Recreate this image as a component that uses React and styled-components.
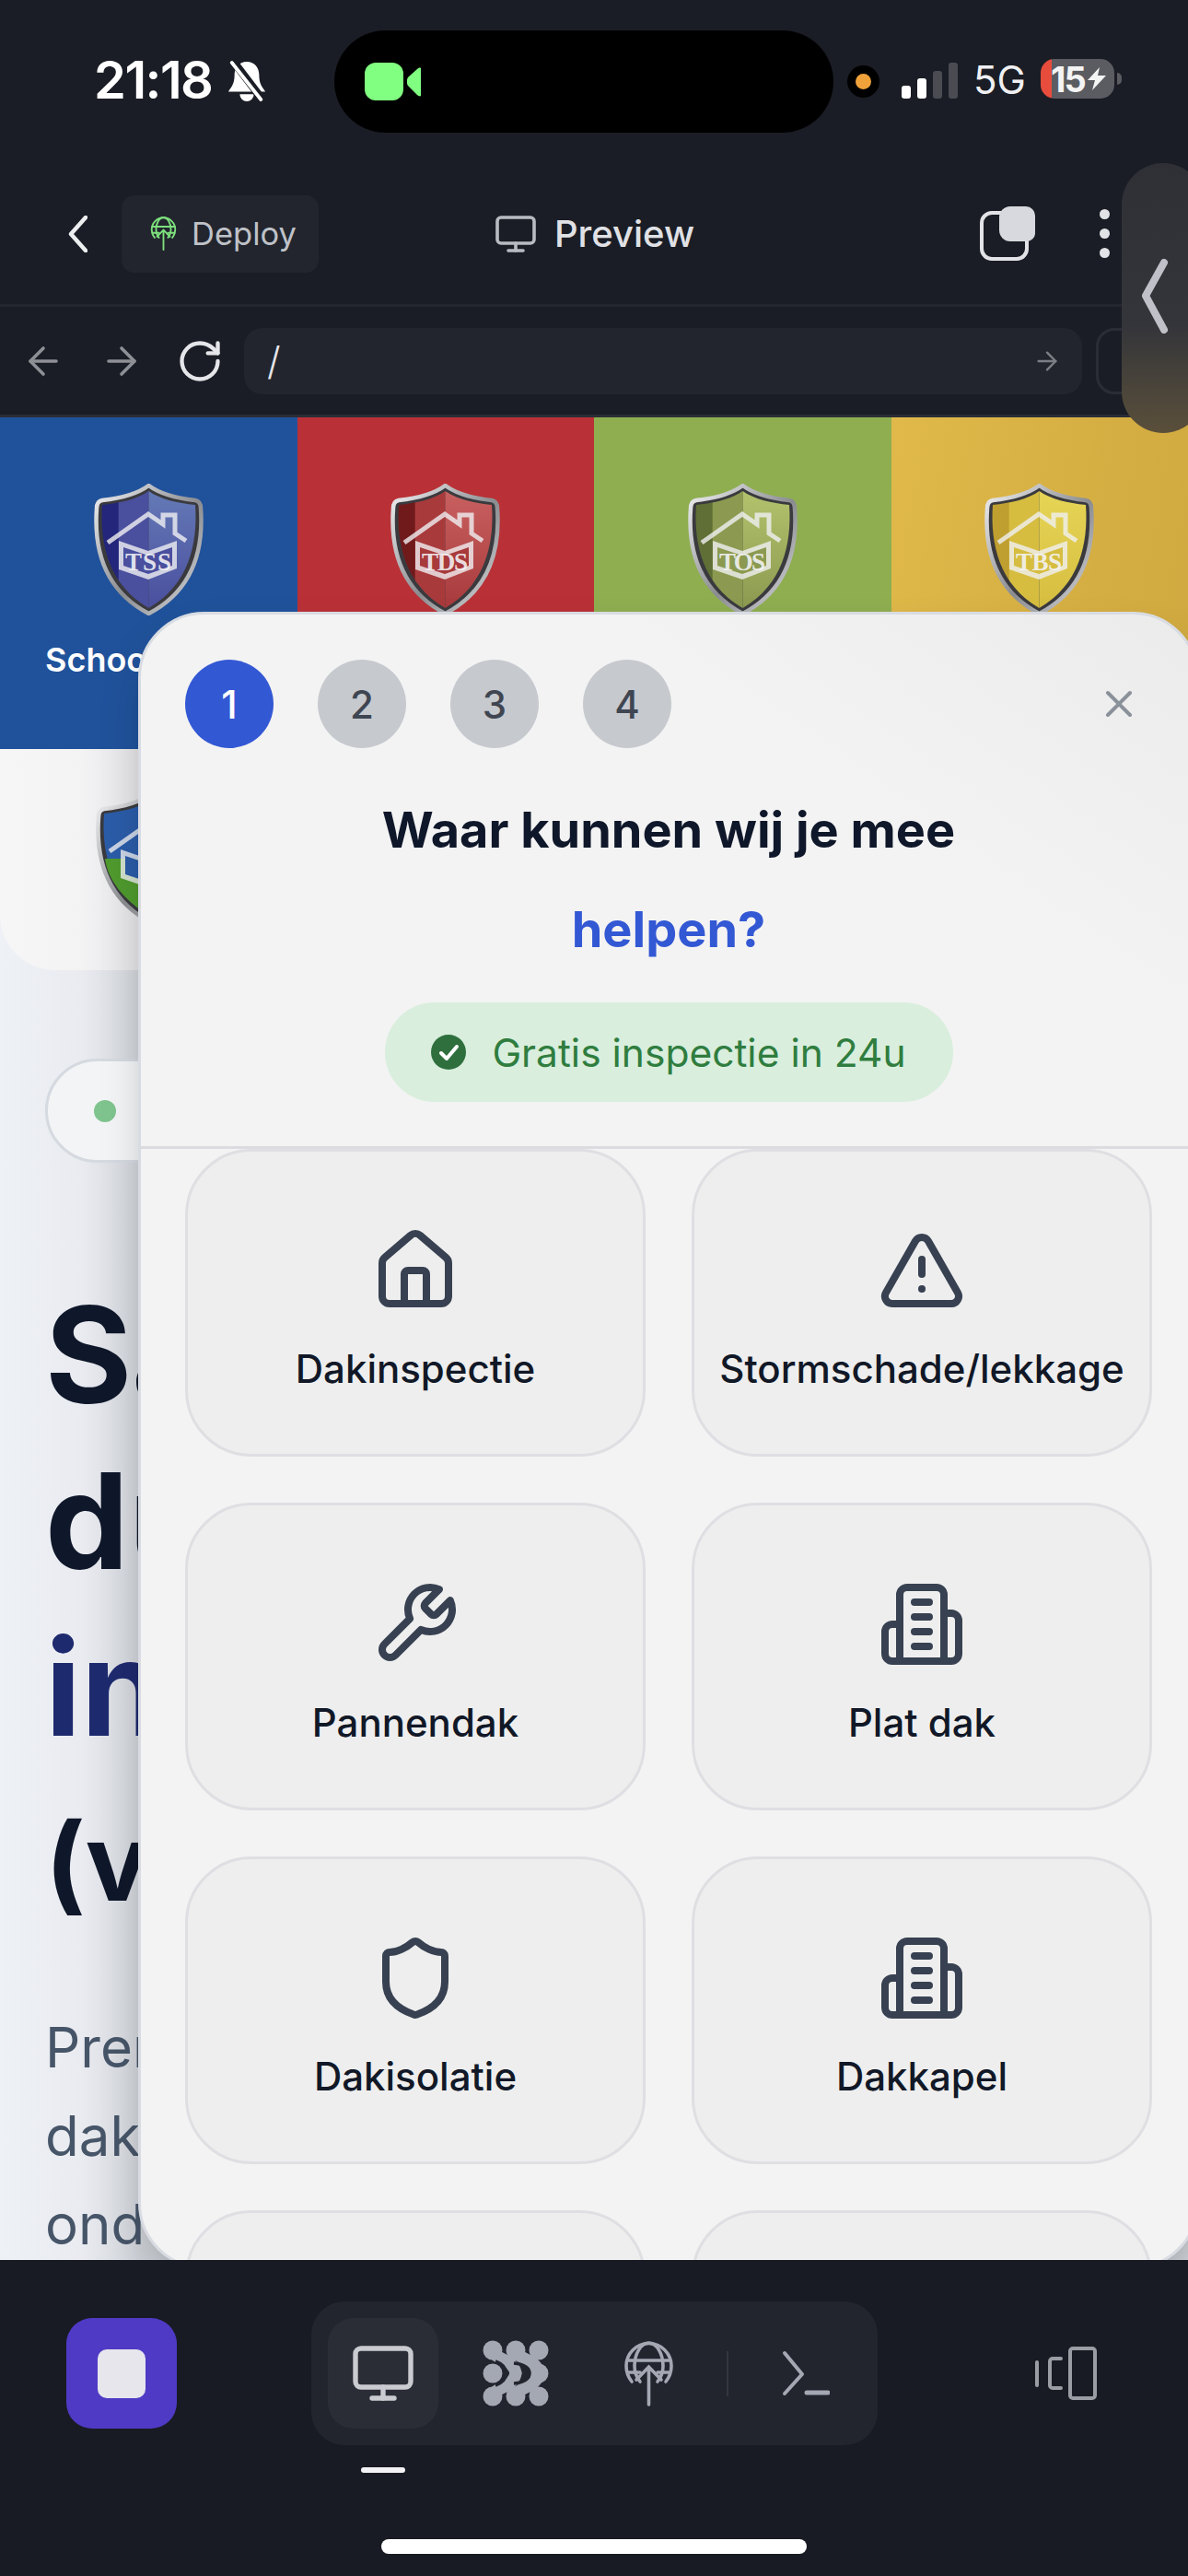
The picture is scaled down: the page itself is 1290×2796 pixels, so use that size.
import React from 'react';
import styled, { createGlobalStyle } from 'styled-components';
import {
  ArrowLeft, ArrowRight, RotateCw, Monitor, X, House, TriangleAlert, Shield,
} from 'lucide-react';

const GlobalStyle = createGlobalStyle`
  html, body { margin: 0; padding: 0; background: #181b23; }
  * { box-sizing: border-box; }
  body { font-family: Inter, "Noto Sans", sans-serif; }
`;

const Phone = styled.div`
  width: 1290px;
  height: 2796px;
  display: flex;
  flex-direction: column;
  overflow: hidden;
  position: relative;
  background: #1a1d25;
`;

/* status bar */
const StatusBar = styled.div`
  height: 177px;
  padding: 33px 0 33px 102px;
  display: flex;
  align-items: center;
  color: #fff;
`;

const Time = styled.div`
  font-size: 56px;
  font-weight: 600;
  letter-spacing: -1.5px;
  width: 133px;
  margin-top: -3px;
`;

const Island = styled.div`
  width: 542px;
  height: 111px;
  margin-left: 74px;
  border-radius: 56px;
  background: #000;
  display: flex;
  align-items: center;
  padding-left: 33px;
  gap: 4px;
`;

const CamBody = styled.div`
  width: 42px;
  height: 41px;
  border-radius: 12px;
  background: #80ff80;
`;

const MicDot = styled.div`
  width: 35px;
  height: 35px;
  margin-left: 15px;
  margin-top: -1px;
  border-radius: 50%;
  background: #000;
  display: flex;
  align-items: center;
  justify-content: center;
  &::after {
    content: '';
    width: 17px;
    height: 17px;
    border-radius: 50%;
    background: #f0a23a;
  }
`;

const Signal = styled.div`
  display: flex;
  align-items: flex-end;
  gap: 7px;
  height: 39px;
  margin-left: 24px;
  margin-top: -3px;
`;

const SignalBar = styled.div`
  width: 10px;
  height: ${(p) => p.$h}px;
  border-radius: 3px;
  background: ${(p) => (p.$on ? '#fff' : '#4a4c52')};
`;

const Network = styled.div`
  font-size: 42px;
  font-weight: 400;
  margin-left: 17px;
  margin-top: -4px;
  width: 73px;
  color: #f0f0f2;
`;

const Battery = styled.div`
  width: 80px;
  height: 43px;
  margin-top: -6px;
  border-radius: 15px;
  overflow: visible;
  position: relative;
  display: flex;
  align-items: center;
  padding-left: 11px;
  background: linear-gradient(90deg, #e74c3c 0, #e74c3c 12px, #5b5c62 12px);
  font-size: 38px;
  font-weight: 700;
  letter-spacing: -2px;
  color: #f4f4f4;
  &::after {
    content: '';
    position: absolute;
    right: -8px;
    top: 15px;
    width: 5px;
    height: 13px;
    border-radius: 0 6px 6px 0;
    background: #5b5c62;
  }
`;

/* toolbar */
const Toolbar = styled.div`
  height: 156px;
  border-bottom: 3px solid #23262e;
  display: grid;
  grid-template-columns: 1fr auto 1fr;
  align-items: center;
  padding-left: 74px;
`;

const ToolLeft = styled.div`
  display: flex;
  align-items: center;
  gap: 37px;
`;

const DeployButton = styled.div`
  width: 214px;
  height: 84px;
  border-radius: 14px;
  background: #22252e;
  display: flex;
  align-items: center;
  padding-left: 31px;
  gap: 16px;
  font-size: 34.5px;
  color: #bfc2c8;
`;

const PreviewTitle = styled.div`
  display: flex;
  align-items: center;
  gap: 18px;
  font-size: 40px;
  font-weight: 500;
  color: #e0e1e5;
  margin-left: -74px;
  svg { color: #b9bbc2; }
`;

const ToolRight = styled.div`
  display: flex;
  justify-content: flex-end;
  align-items: center;
  padding-right: 85px;
  gap: 70px;
`;

const Dots = styled.div`
  display: flex;
  flex-direction: column;
  gap: 10px;
  span {
    display: block;
    width: 11px;
    height: 11px;
    border-radius: 50%;
    background: #e2e3e7;
  }
`;

const SideHandle = styled.div`
  position: absolute;
  top: 177px;
  left: 1218px;
  width: 90px;
  height: 293px;
  border-radius: 48px;
  background: linear-gradient(180deg, #2e3035 0%, #34353a 60%, #5a4f3a 100%);
  padding: 104px 0 0 21px;
  z-index: 5;
`;

/* url bar */
const UrlRow = styled.div`
  height: 120px;
  border-bottom: 3px solid #2a2d36;
  display: flex;
  align-items: center;
  padding-left: 23px;
`;

const NavIcon = styled.div`
  display: flex;
  flex: none;
  color: ${(p) => p.$color};
  margin-right: ${(p) => p.$gap}px;
`;

const UrlField = styled.div`
  flex: none;
  width: 910px;
  height: 72px;
  border-radius: 20px;
  background: #22252e;
  display: flex;
  align-items: center;
  justify-content: space-between;
  padding: 0 22px 0 25px;
  font-size: 42px;
  font-weight: 300;
  color: #e6e6ea;
`;

const GhostField = styled.div`
  flex: none;
  width: 120px;
  height: 72px;
  margin-left: 15px;
  border-radius: 20px;
  border: 3px solid #2a2d36;
`;

/* site behind the sheet */
const Viewport = styled.div`
  height: 2000px;
  position: relative;
  overflow: hidden;
  background: linear-gradient(90deg, #eef1f5 0, #e9ebf0 90px, #d0d3d9 152px);
`;

const Bands = styled.div`
  display: grid;
  grid-template-columns: repeat(4, 1fr);
  height: 360px;
`;

const Band = styled.div`
  background: ${(p) => p.$bg};
  display: flex;
  flex-direction: column;
  align-items: center;
  padding-top: 72px;
`;

const BandLabel = styled.div`
  align-self: flex-start;
  padding-left: 49px;
  margin-top: 26px;
  font-size: 36px;
  font-weight: 600;
  color: #fff;
`;

const LogoCard = styled.div`
  height: 240px;
  width: 420px;
  padding: 47px 0 0 104px;
  border-radius: 0 0 60px 60px;
  background: linear-gradient(90deg, #f6f6f7 0, #f3f3f4 90px, #e2e2e5 152px);
`;

const Content = styled.div`
  padding: 96px 0 0 49px;
  white-space: nowrap;
`;

const Badge = styled.div`
  width: 320px;
  height: 113px;
  border-radius: 57px;
  border: 3px solid #d5d9e0;
  background: #f3f4f6;
  display: flex;
  align-items: center;
  padding-left: 50px;
  &::before {
    content: '';
    width: 24px;
    height: 24px;
    border-radius: 50%;
    background: #7fc48f;
  }
`;

const Headline = styled.h1`
  margin: 117px 0 0;
  font-size: 144px;
  line-height: 181px;
  font-weight: 700;
  color: #0f172a;
`;

const Accent = styled.span`
  display: block;
  color: #1e2a6e;
`;

const Sub = styled.div`
  margin-top: 29px;
  font-size: 116px;
  line-height: 140px;
  font-weight: 700;
  color: #0f172a;
`;

const Lead = styled.p`
  margin: 83px 0 0;
  font-size: 60px;
  line-height: 96px;
  color: #475569;
`;

/* sheet */
const Sheet = styled.div`
  position: absolute;
  left: 150px;
  top: 211px;
  width: 1152px;
  height: 1799px;
  border: 3px solid #d8dce2;
  border-radius: 72px;
  background: linear-gradient(215deg, #ebebec 0, #f3f3f3 380px);
  box-shadow: 0 25px 50px -12px rgba(0, 0, 0, 0.25);
  overflow: hidden;
  display: flex;
  flex-direction: column;
`;

const SheetHead = styled.div`
  height: 580px;
  flex: none;
  padding: 49px 48px 0;
  border-bottom: 3px solid #dcdce0;
  display: flex;
  flex-direction: column;
  align-items: center;
`;

const StepRow = styled.div`
  width: 100%;
  display: flex;
  align-items: center;
  gap: 48px;
  svg { margin-left: auto; margin-right: 12px; color: #8b919b; }
`;

const Step = styled.div`
  width: 96px;
  height: 96px;
  border-radius: 50%;
  display: flex;
  align-items: center;
  justify-content: center;
  font-size: 42px;
  font-weight: 500;
  background: ${(p) => (p.$active ? '#3358d4' : '#c6c9ce')};
  color: ${(p) => (p.$active ? '#fff' : '#3f4652')};
`;

const Title = styled.h2`
  margin: 35px 0 0;
  text-align: center;
  font-size: 54px;
  line-height: 108px;
  font-weight: 700;
  color: #0f172a;
`;

const TitleAccent = styled.span`
  display: block;
  color: #3358d4;
`;

const FreePill = styled.div`
  margin-top: 25px;
  width: 617px;
  height: 108px;
  border-radius: 54px;
  background: #d9eedd;
  display: flex;
  align-items: center;
  justify-content: center;
  gap: 28px;
  font-size: 42.5px;
  color: #2f7d3f;
`;

const CardGrid = styled.div`
  display: grid;
  grid-template-columns: 1fr 1fr;
  grid-auto-rows: 334px;
  gap: 50px;
  padding: 0 48px;
`;

const Card = styled.div`
  border: 3px solid #dfdfe3;
  border-radius: 72px;
  background: #eeeeee;
  display: flex;
  flex-direction: column;
  align-items: center;
  padding-top: 81px;
  gap: 34px;
  font-size: 42px;
  line-height: 50px;
  font-weight: 500;
  color: #111827;
  svg { color: #374151; }
`;

/* bottom bar */
const BottomBar = styled.div`
  flex: 1;
  background: #181b23;
  padding: 45px 0 0 72px;
  position: relative;
`;

const BarRow = styled.div`
  display: flex;
  align-items: center;
  height: 156px;
`;

const StopButton = styled.div`
  width: 120px;
  height: 120px;
  border-radius: 28px;
  background: #4f3ac5;
  display: flex;
  align-items: center;
  justify-content: center;
  &::after {
    content: '';
    width: 52px;
    height: 53px;
    border-radius: 10px;
    background: #e6e6ec;
  }
`;

const TabGroup = styled.div`
  width: 615px;
  height: 156px;
  margin-left: 146px;
  padding: 0 18px;
  border-radius: 36px;
  background: #22252e;
  display: flex;
  align-items: center;
  color: #a4a8b2;
`;

const Tab = styled.div`
  width: ${(p) => p.$w || 120}px;
  height: 120px;
  border-radius: 28px;
  display: flex;
  align-items: center;
  justify-content: center;
  background: ${(p) => (p.$active ? '#2a2d36' : 'transparent')};
  color: ${(p) => (p.$active ? '#c9cbd0' : 'inherit')};
`;

const TabDivider = styled.div`
  width: 2px;
  height: 49px;
  background: #33363f;
  margin: 0 39px 0 25px;
`;

const SplitIcon = styled.div`
  display: flex;
  margin-left: 171px;
`;

const ActiveMark = styled.div`
  position: absolute;
  left: 392px;
  top: 225px;
  width: 48px;
  height: 6px;
  border-radius: 3px;
  background: #f2f2f4;
`;

const HomeIndicator = styled.div`
  position: absolute;
  left: 414px;
  top: 303px;
  width: 462px;
  height: 16px;
  border-radius: 8px;
  background: #fff;
`;

/* drawings */
const BellSlash = () => (
  <svg width="42" height="46" viewBox="0 0 44 46" style={{ marginLeft: 12, marginTop: -2 }}>
    <path d="M22 1c-9 0-14 7-14 15 0 10-3 13-7 19h42c-4-6-7-9-7-19 0-8-5-15-14-15z" fill="#fff" />
    <path d="M14 38a8 8 0 0 0 16 0z" fill="#fff" />
    <path d="M7 1l32 42" stroke="#1a1d25" strokeWidth="9" />
    <path d="M5 2l33 42" stroke="#fff" strokeWidth="4" strokeLinecap="round" />
  </svg>
);

const CamLens = () => (
  <svg width="15" height="32" viewBox="0 0 15 32">
    <path d="M15 1v30c-1 1-3 0-4-1L2 21c-1-1-2-2-2-4v-3c0-2 1-3 2-4l9-8c1-1 3-2 4-1z" fill="#80ff80" />
  </svg>
);

const Bolt = () => (
  <svg width="20" height="25" viewBox="0 0 20 25" style={{ marginLeft: 3 }}>
    <path d="M13 0L0 14h8l-3 11L20 9h-9z" fill="#f4f4f4" />
  </svg>
);

const Chevron = () => (
  <svg width="21" height="40" viewBox="0 0 21 40" fill="none">
    <path d="M19 2L3 20l16 18" stroke="#eceef0" strokeWidth="4.5" strokeLinecap="round" strokeLinejoin="round" />
  </svg>
);

const GlobeUp = ({ w, h, color }) => (
  <svg width={w} height={h} viewBox="0 0 53 71" fill="none" stroke={color} strokeWidth="3.6" strokeLinecap="round">
    <path d="M8 44C4 39 2 33 2 27a24.500 24.500 0 0 1 49 0c0 6-2 12-6 17" />
    <path d="M17 44c-4-5-6-11-6-17 0-13 7-25 15.500-25S42 14 42 27c0 6-2 12-6 17" />
    <path d="M3 21h47M4 34h13M36 34h13" />
    <path d="M26.500 28v41M13 42l13.500-14L40 42" />
  </svg>
);

const CopyMark = () => (
  <svg width="60" height="59" viewBox="0 0 60 59" fill="none">
    <rect x="2" y="7" width="49" height="50" rx="11" stroke="#e2e3e7" strokeWidth="4" />
    <path d="M33 0h17a10 10 0 0 1 10 10v19a9 9 0 0 1-9 9H33a12 12 0 0 1-12-12V12A12 12 0 0 1 33 0z" fill="#d8d9de" />
  </svg>
);

const HandleChevron = () => (
  <svg width="30" height="81" viewBox="0 0 30 81" fill="none">
    <path d="M25 4L5 40l20 37" stroke="#c0c0c8" strokeWidth="8" strokeLinecap="round" strokeLinejoin="round" />
  </svg>
);

const ShieldLogo = ({ id, dark, mid, light, code, lower }) => (
  <svg width="119" height="143" viewBox="1 0 117 143">
    <defs>
      <linearGradient id={`rim-${id}`} x1="0" y1="0" x2="1" y2="1">
        <stop offset="0" stopColor="#f0f0f2" />
        <stop offset="0.55" stopColor="#8a8c90" />
        <stop offset="1" stopColor="#dcdcdf" />
      </linearGradient>
      <linearGradient id={`left-${id}`} x1="0" y1="0" x2="1" y2="0">
        <stop offset="0" stopColor={dark} />
        <stop offset="0.35" stopColor={dark} />
        <stop offset="0.36" stopColor={mid} />
        <stop offset="1" stopColor={mid} />
      </linearGradient>
      <linearGradient id={`right-${id}`} x1="0" y1="0" x2="0" y2="1">
        <stop offset="0" stopColor={light} />
        <stop offset="1" stopColor={mid} />
      </linearGradient>
    </defs>
    <path d="M59.500 2C46 12 28 16 9 18Q3 19 3 27C0 70 10 115 59.500 141C109 115 119 70 116 27Q116 19 110 18C91 16 73 12 59.500 2Z" fill="#3a3a3e" stroke={`url(#rim-${id})`} strokeWidth="4.500" />
    <path d="M59.500 8C47 17 28 21 9 23C6 65 16 110 59.500 135Z" fill={`url(#left-${id})`} />
    <path d="M59.500 8C72 17 91 21 110 23C113 65 103 110 59.500 135Z" fill={`url(#right-${id})`} />
    {lower && <path d="M10 72H59.500V135C30 117 13 95 10 72Z" fill={lower} />}
    <path d="M15 64L59 33L75 44V34H88V54L100 62" fill="none" stroke="#f0f0f2" strokeOpacity="0.8" strokeWidth="5" />
    <path d="M27 62L59 73L90 62V92L59 104L27 93Z" fill="#f0f0f2" fillOpacity="0.8" />
    <path d="M32 69L59 78L85 69V89L59 98L32 89Z" fill={mid} />
    {code && (
      <text x="59" y="94" textAnchor="middle" fontFamily="Liberation Serif, serif" fontWeight="700" fontSize="27" fill="#f4f4f6" fillOpacity="0.9" textLength="50">{code}</text>
    )}
  </svg>
);

const CheckBadge = () => (
  <svg width="38" height="38" viewBox="0 0 38 38" fill="none">
    <circle cx="19" cy="19" r="19" fill="#2f6f3e" />
    <path d="M11 20l6 6 11-13" stroke="#fff" strokeWidth="4" strokeLinecap="round" strokeLinejoin="round" />
  </svg>
);

const MeshIcon = () => (
  <svg width="72" height="72" viewBox="0 0 72 72" fill="#a4a8b2">
    <circle cx="11" cy="11" r="10.500" />
    <circle cx="36" cy="11" r="10.500" />
    <circle cx="61" cy="11" r="10.500" />
    <circle cx="61" cy="36" r="10.500" />
    <circle cx="11" cy="61" r="10.500" />
    <circle cx="36" cy="61" r="10.500" />
    <circle cx="61" cy="61" r="10.500" />
    <g fill="none" stroke="#a4a8b2" strokeWidth="13" strokeLinecap="round">
      <path d="M11 11c2 11 22 8 25 25" />
      <path d="M11 61c2-11 22-8 25-25" />
      <path d="M36 11c2 11 22 8 25 25" />
      <path d="M36 61c2-11 22-8 25-25" />
    </g>
    <path d="M34 25C46 26 51 31 51 36S46 46 34 47" fill="none" stroke="#22252e" strokeWidth="3.500" />
    <path d="M14 23C22 26 25.500 31 25.500 36S22 46 14 49" fill="none" stroke="#22252e" strokeWidth="3.500" />
    <circle cx="11" cy="36" r="10.500" />
  </svg>
);

const PromptIcon = () => (
  <svg width="52" height="50" viewBox="0 0 52 50" fill="none" stroke="#a4a8b2" strokeLinecap="round" strokeLinejoin="round">
    <path d="M3 3l19 23L3 47" strokeWidth="4" />
    <path d="M27 46h23" strokeWidth="5" />
  </svg>
);

const SplitGlyph = () => (
  <svg width="67" height="58" viewBox="0 0 67 58" fill="none" stroke="#9a9da4" strokeWidth="4" strokeLinecap="round" strokeLinejoin="round">
    <rect x="38" y="2" width="27" height="54" rx="3" />
    <path d="M28 13h-9a3 3 0 0 0-3 3v26a3 3 0 0 0 3 3h9" />
    <path d="M2 17v25" />
  </svg>
);

const LineIcon = ({ children }) => (
  <svg width="96" height="96" viewBox="0 0 24 24" fill="none" stroke="currentColor" strokeWidth="2" strokeLinecap="round" strokeLinejoin="round">
    {children}
  </svg>
);

const WrenchIcon = () => (
  <LineIcon>
    <path d="M14.7 6.300a1 1 0 0 0 0 1.400l1.600 1.600a1 1 0 0 0 1.400 0l3.770-3.770a6 6 0 0 1-7.940 7.940l-6.910 6.910a2.120 2.120 0 0 1-3-3l6.910-6.910a6 6 0 0 1 7.940-7.940l-3.760 3.760z" />
  </LineIcon>
);

const TowerIcon = () => (
  <LineIcon>
    <path d="M6 22V4a2 2 0 0 1 2-2h8a2 2 0 0 1 2 2v18Z" />
    <path d="M6 12H4a2 2 0 0 0-2 2v6a2 2 0 0 0 2 2h2" />
    <path d="M18 9h2a2 2 0 0 1 2 2v9a2 2 0 0 1-2 2h-2" />
    <path d="M10 6h4M10 10h4M10 14h4M10 18h4" />
  </LineIcon>
);

const HouseIcon = () => <House size={96} strokeWidth={2} />;
const AlertIcon = () => <TriangleAlert size={96} strokeWidth={2} />;
const GuardIcon = () => <Shield size={96} strokeWidth={2} />;

const bands = [
  { id: 'a', bg: '#20529b', dark: '#23267a', mid: '#4a4f9e', light: '#6479b6', code: 'TSS', label: 'School' },
  { id: 'b', bg: '#b93136', dark: '#701a1c', mid: '#a83a3c', light: '#c96060', code: 'TDS' },
  { id: 'c', bg: '#8eae50', dark: '#5f6f35', mid: '#8b9a50', light: '#b2c26c', code: 'TOS' },
  { id: 'd', bg: 'linear-gradient(100deg, #e0b94a, #cfa83f)', dark: '#bf9f2f', mid: '#d6bd40', light: '#e6d556', code: 'TBS' },
];

const services = [
  { label: 'Dakinspectie', Icon: HouseIcon },
  { label: 'Stormschade/lekkage', Icon: AlertIcon },
  { label: 'Pannendak', Icon: WrenchIcon },
  { label: 'Plat dak', Icon: TowerIcon },
  { label: 'Dakisolatie', Icon: GuardIcon },
  { label: 'Dakkapel', Icon: TowerIcon },
  {},
  {},
];

const App = () => (
  <Phone>
    <GlobalStyle />
    <StatusBar>
      <Time>21:18</Time>
      <BellSlash />
      <Island>
        <CamBody />
        <CamLens />
      </Island>
      <MicDot />
      <Signal>
        <SignalBar $h={14} $on />
        <SignalBar $h={22} $on />
        <SignalBar $h={30} />
        <SignalBar $h={39} />
      </Signal>
      <Network>5G</Network>
      <Battery>
        15
        <Bolt />
      </Battery>
    </StatusBar>

    <Toolbar>
      <ToolLeft>
        <Chevron />
        <DeployButton>
          <GlobeUp w={29} h={37} color="#7de07d" />
          Deploy
        </DeployButton>
      </ToolLeft>
      <PreviewTitle>
        <Monitor size={48} strokeWidth={1.8} />
        Preview
      </PreviewTitle>
      <ToolRight>
        <CopyMark />
        <Dots><span /><span /><span /></Dots>
      </ToolRight>
    </Toolbar>
    <SideHandle><HandleChevron /></SideHandle>

    <UrlRow>
      <NavIcon $color="#8e9096" $gap={37}><ArrowLeft size={48} strokeWidth={1.8} /></NavIcon>
      <NavIcon $color="#8e9096" $gap={35}><ArrowRight size={48} strokeWidth={1.8} /></NavIcon>
      <NavIcon $color="#e5e6ea" $gap={22}><RotateCw size={52} strokeWidth={2} /></NavIcon>
      <UrlField>
        /
        <NavIcon $color="#7d7f86" $gap={0}><ArrowRight size={32} strokeWidth={1.8} /></NavIcon>
      </UrlField>
      <GhostField />
    </UrlRow>

    <Viewport>
      <Bands>
        {bands.map((b) => (
          <Band key={b.id} $bg={b.bg}>
            <ShieldLogo id={b.id} dark={b.dark} mid={b.mid} light={b.light} code={b.code} />
            {b.label && <BandLabel>{b.label}</BandLabel>}
          </Band>
        ))}
      </Bands>
      <LogoCard>
        <ShieldLogo id="e" dark="#2b5ca8" mid="#2b5ca8" light="#5b86c4" lower="#4f9a2e" />
      </LogoCard>
      <Content>
        <Badge />
        <Headline>
          Sa
          <br />
          du
          <Accent>in</Accent>
        </Headline>
        <Sub>(v</Sub>
        <Lead>
          Prem
          <br />
          dak
          <br />
          ond
        </Lead>
      </Content>

      <Sheet>
        <SheetHead>
          <StepRow>
            <Step $active>1</Step>
            <Step>2</Step>
            <Step>3</Step>
            <Step>4</Step>
            <X size={48} strokeWidth={2} />
          </StepRow>
          <Title>
            Waar kunnen wij je mee
            <TitleAccent>helpen?</TitleAccent>
          </Title>
          <FreePill>
            <CheckBadge />
            Gratis inspectie in 24u
          </FreePill>
        </SheetHead>
        <CardGrid>
          {services.map(({ label, Icon }, i) => (
            <Card key={label || i}>
              {Icon && <Icon />}
              {label}
            </Card>
          ))}
        </CardGrid>
      </Sheet>
    </Viewport>

    <BottomBar>
      <BarRow>
        <StopButton />
        <TabGroup>
          <Tab $active><Monitor size={72} strokeWidth={1.8} /></Tab>
          <Tab $w={168}><MeshIcon /></Tab>
          <Tab $w={120}><GlobeUp w={53} h={71} color="#a4a8b2" /></Tab>
          <TabDivider />
          <Tab $w={90}><PromptIcon /></Tab>
        </TabGroup>
        <SplitIcon><SplitGlyph /></SplitIcon>
      </BarRow>
      <ActiveMark />
      <HomeIndicator />
    </BottomBar>
  </Phone>
);

export default App;
